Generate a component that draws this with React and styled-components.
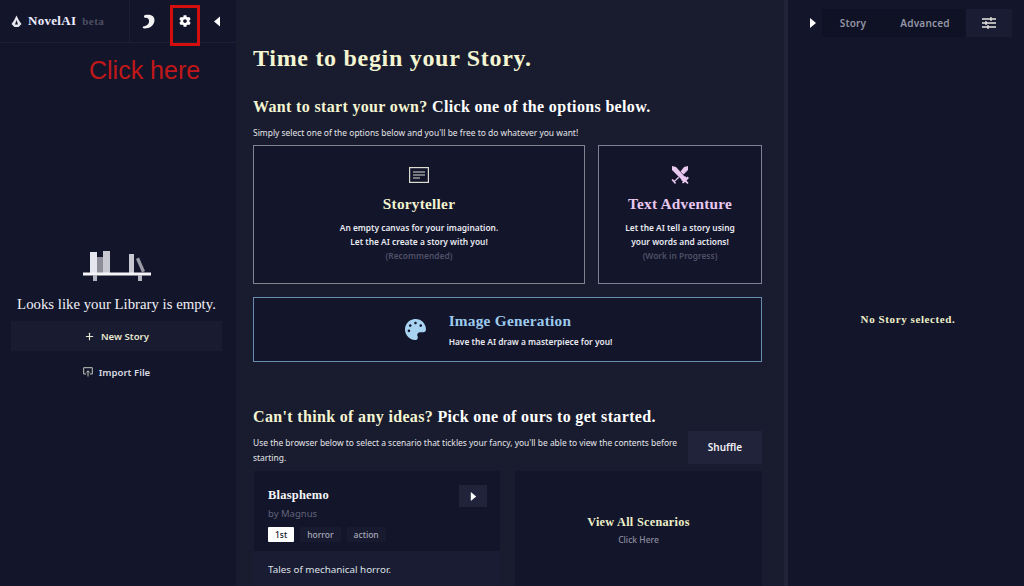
import React from 'react'
import styled, { createGlobalStyle } from 'styled-components'
import { FaCog, FaPalette } from 'react-icons/fa'
import { Plus } from 'lucide-react'

const serif = `"Liberation Serif", "DejaVu Serif", serif`
const sans = `"Noto Sans", "Open Sans", sans-serif`

const Global = createGlobalStyle`
  html, body { margin: 0; padding: 0; height: 100%; background: #191c2e; overflow: hidden; }
  * { box-sizing: border-box; }
`

const Page = styled.div`
  position: relative;
  width: 1024px;
  height: 586px;
  display: flex;
  overflow: hidden;
  font-family: ${sans};
  color: #fff;
`

/* left column */
const Sidebar = styled.aside`
  width: 236px;
  background: #13152b;
  display: flex;
  flex-direction: column;
  flex-shrink: 0;
`
const SideHead = styled.div`
  height: 43px;
  display: flex;
  align-items: center;
  border-bottom: 1px solid #1c1f35;
`
const Brand = styled.div`
  width: 130px;
  height: 100%;
  padding-left: 11px;
  display: flex;
  align-items: center;
  gap: 6px;
  border-right: 1px solid #1c1f35;
`
const BrandName = styled.span`
  font: bold 13px ${serif};
  letter-spacing: 0.3px;
  color: #eef;
`
const Beta = styled.span`
  font: bold 11px ${serif};
  letter-spacing: 0.4px;
  color: #4d5063;
`
const HeadIcons = styled.div`
  flex: 1;
  display: flex;
  align-items: center;
  padding: 0 16px 0 12px;
  justify-content: space-between;
  color: #fff;
`
const EmptyBox = styled.div`
  flex: 1;
  padding: 208px 14px 0 11px;
  display: flex;
  flex-direction: column;
  align-items: center;
`
const EmptyText = styled.div`
  font: 14.8px ${serif};
  color: #f0f0f5;
  margin-top: 13px;
  line-height: 20px;
`
const NewStory = styled.div`
  width: 211px;
  height: 30px;
  margin-top: 7px;
  background: #191b31;
  display: flex;
  align-items: center;
  justify-content: center;
  gap: 6px;
  font-size: 9.6px;
  font-weight: 600;
  color: #e6e8cf;
`
const Import = styled.div`
  width: 211px;
  height: 36px;
  margin-top: 3px;
  display: flex;
  align-items: center;
  justify-content: center;
  gap: 6px;
  font-size: 9.6px;
  font-weight: 600;
  color: #d8d9e0;
`

/* main column */
const Main = styled.main`
  width: 548px;
  padding: 0 22px 0 17px;
  flex-shrink: 0;
`
const Title = styled.h1`
  margin: 43px 0 0;
  font: bold 24px/30px ${serif};
  letter-spacing: 0.7px;
  color: #f4f5d2;
`
const Heading = styled.h2`
  margin: ${p => p.$top}px 0 0;
  font: bold 16px/20px ${serif};
  letter-spacing: 0.34px;
  color: #fff;
  span { color: #f4f5d2; }
`
const Small = styled.p`
  margin: 8px 0 0;
  font-size: 8.45px;
  line-height: 15px;
  color: #e4e5ea;
`
const ScenarioText = styled(Small)`
  margin: 0;
  padding-top: 4px;
`
const OptionGrid = styled.div`
  display: grid;
  grid-template-columns: 332px 164px;
  grid-template-rows: 139px 65px;
  gap: 13px;
  margin-top: 5px;
`
const Option = styled.div`
  background: #13152b;
  border: 1px solid ${p => p.$line};
  grid-column: ${p => p.$wide ? '1 / 3' : 'auto'};
  display: flex;
  flex-direction: ${p => p.$wide ? 'row' : 'column'};
  align-items: center;
  justify-content: center;
  gap: ${p => p.$wide ? 23 : 0}px;
  padding-left: ${p => p.$wide ? 2 : 0}px;
  text-align: center;
`
const OptionTitle = styled.div`
  font: bold 15.3px/20px ${serif};
  letter-spacing: 0.25px;
  color: ${p => p.$color};
  margin-top: ${p => p.$top || 0}px;
`
const OptionText = styled.div`
  font-size: 8.4px;
  font-weight: 600;
  line-height: 14px;
  color: #e9eaf0;
  margin-top: ${p => p.$top || 0}px;
`
const Muted = styled.div`
  font-size: 8.4px;
  font-weight: 600;
  line-height: 14px;
  color: #4e5066;
`
const WideText = styled.div`
  text-align: left;
`
const ScenarioTop = styled.div`
  display: flex;
  justify-content: space-between;
  align-items: flex-start;
  gap: 8px;
  margin-top: 4px;
`
const Shuffle = styled.div`
  width: 74px;
  height: 33px;
  padding-bottom: 2px;
  flex-shrink: 0;
  background: #21233b;
  display: flex;
  align-items: center;
  justify-content: center;
  font-size: 10px;
  font-weight: 600;
  color: #f0f0f4;
`
const ScenarioGrid = styled.div`
  display: grid;
  grid-template-columns: 246px 247px;
  gap: 15px;
  margin-top: 6px;
  padding-left: 1px;
  height: 120px;
`
const ScenarioCard = styled.div`
  background: #191c32;
  display: flex;
  flex-direction: column;
`
const CardHead = styled.div`
  height: 80px;
  background: #13152b;
  padding: 16px 13px 0 14px;
  display: flex;
  justify-content: space-between;
`
const CardTitle = styled.div`
  font: bold 12.5px/16px ${serif};
  letter-spacing: 0.2px;
  color: #f5f5f8;
`
const ByLine = styled.div`
  font-size: 9.5px;
  line-height: 14px;
  margin-top: 4px;
  color: #62647a;
`
const Tags = styled.div`
  display: flex;
  gap: 6px;
  margin-top: 6px;
`
const Tag = styled.div`
  height: 15px;
  padding: 0 7px;
  background: ${p => p.$on ? '#fff' : '#181a30'};
  color: ${p => p.$on ? '#13152b' : '#a7a9b8'};
  font-size: 8.5px;
  font-weight: 500;
  display: flex;
  align-items: center;
  border-radius: 1px;
`
const PlayBtn = styled.div`
  width: 28px;
  height: 22px;
  margin-top: -2px;
  background: #21233b;
  display: flex;
  align-items: center;
  justify-content: center;
`
const CardBody = styled.div`
  padding: 11px 14px;
  font-size: 9.8px;
  line-height: 15px;
  color: #dfe0e6;
`
const AllCard = styled.div`
  background: #13152b;
  padding-top: 43px;
  text-align: center;
`
const AllTitle = styled.div`
  font: bold 12.2px/16px ${serif};
  letter-spacing: 0.3px;
  color: #eef0c8;
`
const AllSub = styled.div`
  font-size: 8.5px;
  font-weight: 500;
  line-height: 14px;
  margin-top: 3px;
  color: #8b8d9e;
`

/* right column */
const Gutter = styled.div`
  width: 4px;
  background: #20233a;
  flex-shrink: 0;
`
const Panel = styled.aside`
  flex: 1;
  background: #13152b;
  display: flex;
  flex-direction: column;
`
const PanelHead = styled.div`
  height: 46px;
  padding: 9px 12px 0 16px;
  display: flex;
  align-items: flex-start;
`
const ArrowCell = styled.div`
  width: 18px;
  height: 28px;
  display: flex;
  align-items: center;
  justify-content: center;
`
const Tabs = styled.div`
  flex: 1;
  height: 28px;
  background: #0f1124;
  display: flex;
  align-items: stretch;
`
const Tab = styled.div`
  width: ${p => p.$w}px;
  display: flex;
  align-items: center;
  justify-content: center;
  font-size: 10px;
  font-weight: 600;
  letter-spacing: 0.2px;
  color: #9496a6;
  background: ${p => p.$on ? '#1a1c33' : 'transparent'};
`
const PanelBody = styled.div`
  flex: 1;
  display: flex;
  justify-content: center;
  padding: 265px 0 0 4px;
  font: bold 11px/16px ${serif};
  letter-spacing: 0.6px;
  color: #eef0c8;
`

/* annotation drawn over the screenshot */
const RedBox = styled.div`
  position: absolute;
  left: 170px;
  top: 5px;
  width: 30px;
  height: 41px;
  border: 3px solid #d40d0d;
`
const RedLabel = styled.div`
  position: absolute;
  left: 89px;
  top: 55px;
  font: 25px/30px "Liberation Sans", Arial, sans-serif;
  color: #c01818;
`

const Triangle = ({ dir = 'right', size = 9, h = 12 }) => (
  <svg width={size} height={h} viewBox="0 0 6 10">
    <path d={dir === 'right' ? 'M0 0 L6 5 L0 10 Z' : 'M6 0 L0 5 L6 10 Z'} fill="#fff" />
  </svg>
)

const Logo = () => (
  <svg width="11" height="13" viewBox="0 0 11 13">
    <path d="M5.5 0.5 L8 5.5 L10.5 9 L7.5 12 H3.5 L0.5 9 L3 5.5 Z" fill="#e8e8f0" />
    <path d="M5.5 5 L7 9.5 H4 Z" fill="#13152b" />
  </svg>
)

const Moon = () => (
  <svg width="13" height="15" viewBox="0 0 13 15">
    <path d="M3 1 C8 0 12.5 1.5 12.5 6 C12.5 11 8 14.5 2.5 14.5 C1 14.5 0.3 13.5 1 12.5 C5 12 7.5 9.5 7 6.5 C6.7 4.5 5 3.5 3 4 C1.5 3 1.8 1.5 3 1 Z" fill="#f2f2f2" />
  </svg>
)

const Shelf = () => (
  <svg width="68" height="30" viewBox="0 0 68 30">
    <rect x="7" y="1" width="7" height="21" fill="#e6e6ee" />
    <rect x="14" y="6" width="6" height="16" fill="#8e8e9a" />
    <rect x="20" y="0" width="7" height="22" fill="#c8c8d2" />
    <rect x="46" y="3" width="5" height="19" fill="#c8c8d2" />
    <path d="M53 8 L56 6.5 L62 20 L59 21.5 Z" fill="#9a9aa6" />
    <rect x="0" y="21.5" width="68" height="3" fill="#f5f5f8" />
    <rect x="10" y="24" width="4" height="6" fill="#b5b5c0" />
    <rect x="55" y="24" width="4" height="6" fill="#b5b5c0" />
  </svg>
)

const TextIcon = () => (
  <svg width="20" height="16" viewBox="0 0 20 16" fill="none" stroke="#dcdccf">
    <rect x="0.6" y="0.6" width="18.8" height="14.8" strokeWidth="1.2" />
    <path d="M4 5 H16 M4 8 H16 M4 11 H11" strokeWidth="1.2" />
  </svg>
)

const Swords = () => (
  <svg width="18" height="18" viewBox="0 0 18 18" fill="#e9c8f0">
    <path d="M1 0 L5 1 L14 11 L11 14 L1 4 Z" />
    <path d="M17 0 L17 4 L12.5 8.5 L9.5 5.5 L13 1 Z" />
    <path d="M7.5 10.5 L3.5 14.5 L1.5 13 L0.5 14 L4 18 L5 17 L4 15.5 L8 12 Z" />
    <path d="M10 14 L14 10 L15.5 11.5 L16.5 10.5 L18 12 L15.5 14.5 L17.5 17 L16.5 18 L14 16 L12 17.5 L11 16.5 L12 15.5 Z" />
  </svg>
)

const Sliders = () => (
  <svg width="14" height="12" viewBox="0 0 14 12" stroke="#e8e8e0" strokeWidth="1.3">
    <path d="M0 2 H14 M0 6 H14 M0 10 H14" />
    <path d="M9 0 V4 M4 4 V8 M6 8 V12" />
  </svg>
)

const ImportIcon = () => (
  <svg width="10" height="10" viewBox="0 0 10 10" fill="none" stroke="#c5c5b8" strokeWidth="1">
    <path d="M3 7 H0.7 V0.7 H9.3 V7 H7" />
    <path d="M5 9.5 V4 M3.3 5.5 L5 3.8 L6.7 5.5" />
  </svg>
)

export default function App() {
  return (
    <Page>
      <Global />
      <Sidebar>
        <SideHead>
          <Brand>
            <Logo />
            <BrandName>NovelAI</BrandName>
            <Beta>beta</Beta>
          </Brand>
          <HeadIcons>
            <Moon />
            <FaCog size={12} />
            <Triangle dir="left" size={6} h={11} />
          </HeadIcons>
        </SideHead>
        <EmptyBox>
          <Shelf />
          <EmptyText>Looks like your Library is empty.</EmptyText>
          <NewStory><Plus size={11} color="#e6e8cf" strokeWidth={2.5} />New Story</NewStory>
          <Import><ImportIcon />Import File</Import>
        </EmptyBox>
      </Sidebar>

      <Main>
        <Title>Time to begin your Story.</Title>
        <Heading $top={24}><span>Want to start your own?</span> Click one of the options below.</Heading>
        <Small>Simply select one of the options below and you'll be free to do whatever you want!</Small>
        <OptionGrid>
          <Option $line="#80838f">
            <TextIcon />
            <OptionTitle $color="#f1f3cf" $top={11}>Storyteller</OptionTitle>
            <OptionText $top={7}>An empty canvas for your imagination.<br />Let the AI create a story with you!</OptionText>
            <Muted>(Recommended)</Muted>
          </Option>
          <Option $line="#7f8096">
            <Swords />
            <OptionTitle $color="#e9c8f0" $top={10}>Text Adventure</OptionTitle>
            <OptionText $top={7}>Let the AI tell a story using<br />your words and actions!</OptionText>
            <Muted>(Work in Progress)</Muted>
          </Option>
          <Option $wide $line="#6a8bb0">
            <FaPalette size={21} color="#a8d4f2" />
            <WideText>
              <OptionTitle $color="#9ccaec">Image Generation</OptionTitle>
              <OptionText $top={4}>Have the AI draw a masterpiece for you!</OptionText>
            </WideText>
          </Option>
        </OptionGrid>
        <Heading $top={45}><span>Can't think of any ideas?</span> Pick one of ours to get started.</Heading>
        <ScenarioTop>
          <ScenarioText>Use the browser below to select a scenario that tickles your fancy, you'll be able to view the contents before starting.</ScenarioText>
          <Shuffle>Shuffle</Shuffle>
        </ScenarioTop>
        <ScenarioGrid>
          <ScenarioCard>
            <CardHead>
              <div>
                <CardTitle>Blasphemo</CardTitle>
                <ByLine>by Magnus</ByLine>
                <Tags>
                  <Tag $on>1st</Tag>
                  <Tag>horror</Tag>
                  <Tag>action</Tag>
                </Tags>
              </div>
              <PlayBtn><Triangle size={7} h={9} /></PlayBtn>
            </CardHead>
            <CardBody>Tales of mechanical horror.</CardBody>
          </ScenarioCard>
          <AllCard>
            <AllTitle>View All Scenarios</AllTitle>
            <AllSub>Click Here</AllSub>
          </AllCard>
        </ScenarioGrid>
      </Main>

      <Gutter />
      <Panel>
        <PanelHead>
          <ArrowCell><Triangle size={6} h={10} /></ArrowCell>
          <Tabs>
            <Tab $w={62}>Story</Tab>
            <Tab $w={82}>Advanced</Tab>
            <Tab $w={46} $on><Sliders /></Tab>
          </Tabs>
        </PanelHead>
        <PanelBody>No Story selected.</PanelBody>
      </Panel>

      <RedBox />
      <RedLabel>Click here</RedLabel>
    </Page>
  )
}
